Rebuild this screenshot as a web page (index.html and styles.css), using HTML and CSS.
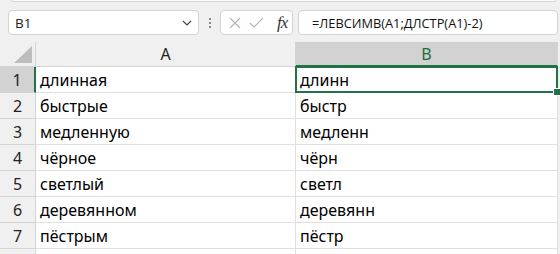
FILE: index.html
```html
<!DOCTYPE html>
<html lang="ru">
  <head>
    <meta charset="UTF-8" />
    <meta name="viewport" content="width=device-width, initial-scale=1.0" />
    <title>Лист</title>
    <link rel="stylesheet" href="styles.css">
  </head>
  <body>
    <div class="ribbon_edge"></div>
    <div class="toolbar">
      <div class="namebox">
        <span>B1</span>
        <svg width="10" height="6" viewBox="0 0 10 6"><path d="M1 1l4 4 4-4" fill="none" stroke="#444" stroke-width="1.2"/></svg>
      </div>
      <div class="grip"><i></i><i></i><i></i></div>
      <div class="fxbox">
        <svg width="12" height="12" viewBox="0 0 12 12"><path d="M1 1l10 10M11 1L1 11" stroke="#b4b4b4" stroke-width="1.1"/></svg>
        <svg width="15" height="11" viewBox="0 0 15 11"><path d="M1 6l4 4 9-9" fill="none" stroke="#b4b4b4" stroke-width="1.1"/></svg>
        <span class="fx">fx</span>
      </div>
      <div class="formula">=ЛЕВСИМВ(А1;ДЛСТР(А1)-2)</div>
    </div>

    <div class="sheet">
      <div class="corner"><svg width="18" height="17" viewBox="0 0 18 17"><path d="M18 0V17H0z" fill="#bdbdbd"/></svg></div>
      <div class="colhead">A</div>
      <div class="colhead valgt">B</div>

      <div class="rowhead valgt">1</div><div class="cell">длинная</div><div class="cell aktiv">длинн</div>
      <div class="rowhead">2</div><div class="cell">быстрые</div><div class="cell">быстр</div>
      <div class="rowhead">3</div><div class="cell">медленную</div><div class="cell">медленн</div>
      <div class="rowhead">4</div><div class="cell">чёрное</div><div class="cell">чёрн</div>
      <div class="rowhead">5</div><div class="cell">светлый</div><div class="cell">светл</div>
      <div class="rowhead">6</div><div class="cell">деревянном</div><div class="cell">деревянн</div>
      <div class="rowhead">7</div><div class="cell">пёстрым</div><div class="cell">пёстр</div>
      <div class="rowhead"></div><div class="cell"></div><div class="cell"></div>
    </div>
  </body>
</html>
```

FILE: styles.css
```css
* {
  box-sizing: border-box;
  margin: 0;
  padding: 0;
}

body {
  background-color: #f0f0f0;
  font-family: "Noto Sans", Lato, sans-serif;
  overflow: hidden;
}

.ribbon_edge {
  height: 2px;
  margin: 0 4px 0 11px;
  background-color: #fafafa;
  border: 1px solid #d6d6d6;
  border-top: none;
  border-radius: 0 0 4px 4px;
}

.toolbar {
  display: flex;
  align-items: center;
  height: 40px;
  padding: 8px 0 7px 8px;
}

.namebox,
.fxbox,
.formula {
  height: 25px;
  background-color: #fff;
  border: 1px solid #d4d4d4;
  border-radius: 4px;
  display: flex;
  align-items: center;
}

.namebox {
  width: 191px;
  justify-content: space-between;
  padding: 0 6px 0 6px;
  font-family: "Open Sans", sans-serif;
  font-size: 13.5px;
  color: #222;
}

.grip {
  width: 21px;
  display: flex;
  flex-direction: column;
  align-items: center;
  gap: 2px;
}
.grip i {
  width: 2px;
  height: 2px;
  background-color: #8a8a8a;
}

.fxbox {
  width: 73px;
  padding: 0 4px 0 8px;
  gap: 8px;
}
.fx {
  font-family: "Liberation Serif", serif;
  font-style: italic;
  font-size: 17px;
  color: #333;
  margin-left: 5px;
  letter-spacing: -1px;
}

.formula {
  width: 260px;
  margin-left: 5px;
  padding-left: 13px;
  font-family: "Open Sans", sans-serif;
  font-size: 12.8px;
  color: #111;
}

.sheet {
  display: grid;
  grid-template-columns: 36px 260px 262px;
  grid-template-rows: 25px;
  grid-auto-rows: 26px;
  font-size: 16px;
}

.corner {
  display: flex;
  align-items: flex-end;
  justify-content: flex-end;
  padding: 0 3px 3px 0;
  border-right: 1px solid #d4d4d4;
  border-bottom: 1px solid #d4d4d4;
}

.colhead {
  display: flex;
  align-items: center;
  justify-content: center;
  color: #222;
  border-right: 1px solid #d4d4d4;
  border-bottom: 1px solid #d4d4d4;
}
.colhead.valgt {
  background-color: #d2d2d2;
  color: #1c6b3f;
  border-bottom: 2px solid #217346;
  padding-top: 1px;
}

.rowhead {
  display: flex;
  align-items: center;
  justify-content: center;
  color: #222;
  border-right: 1px solid #d4d4d4;
  border-bottom: 1px solid #d4d4d4;
}
.rowhead.valgt {
  background-color: #d2d2d2;
  border-right: 2px solid #217346;
}

.cell {
  display: flex;
  align-items: center;
  padding: 1px 0 0 4px;
  color: #000;
  background-color: #fff;
  border-right: 1px solid #e0e0e0;
  border-bottom: 1px solid #e0e0e0;
}

.aktiv {
  position: relative;
}
.aktiv::after {
  content: "";
  position: absolute;
  top: -1px;
  left: -1px;
  right: -1px;
  bottom: -1px;
  border: 2px solid #217346;
}
.aktiv::before {
  content: "";
  position: absolute;
  right: -4px;
  bottom: -4px;
  width: 6px;
  height: 6px;
  background-color: #217346;
  border: 1px solid #fff;
  z-index: 1;
}
```
